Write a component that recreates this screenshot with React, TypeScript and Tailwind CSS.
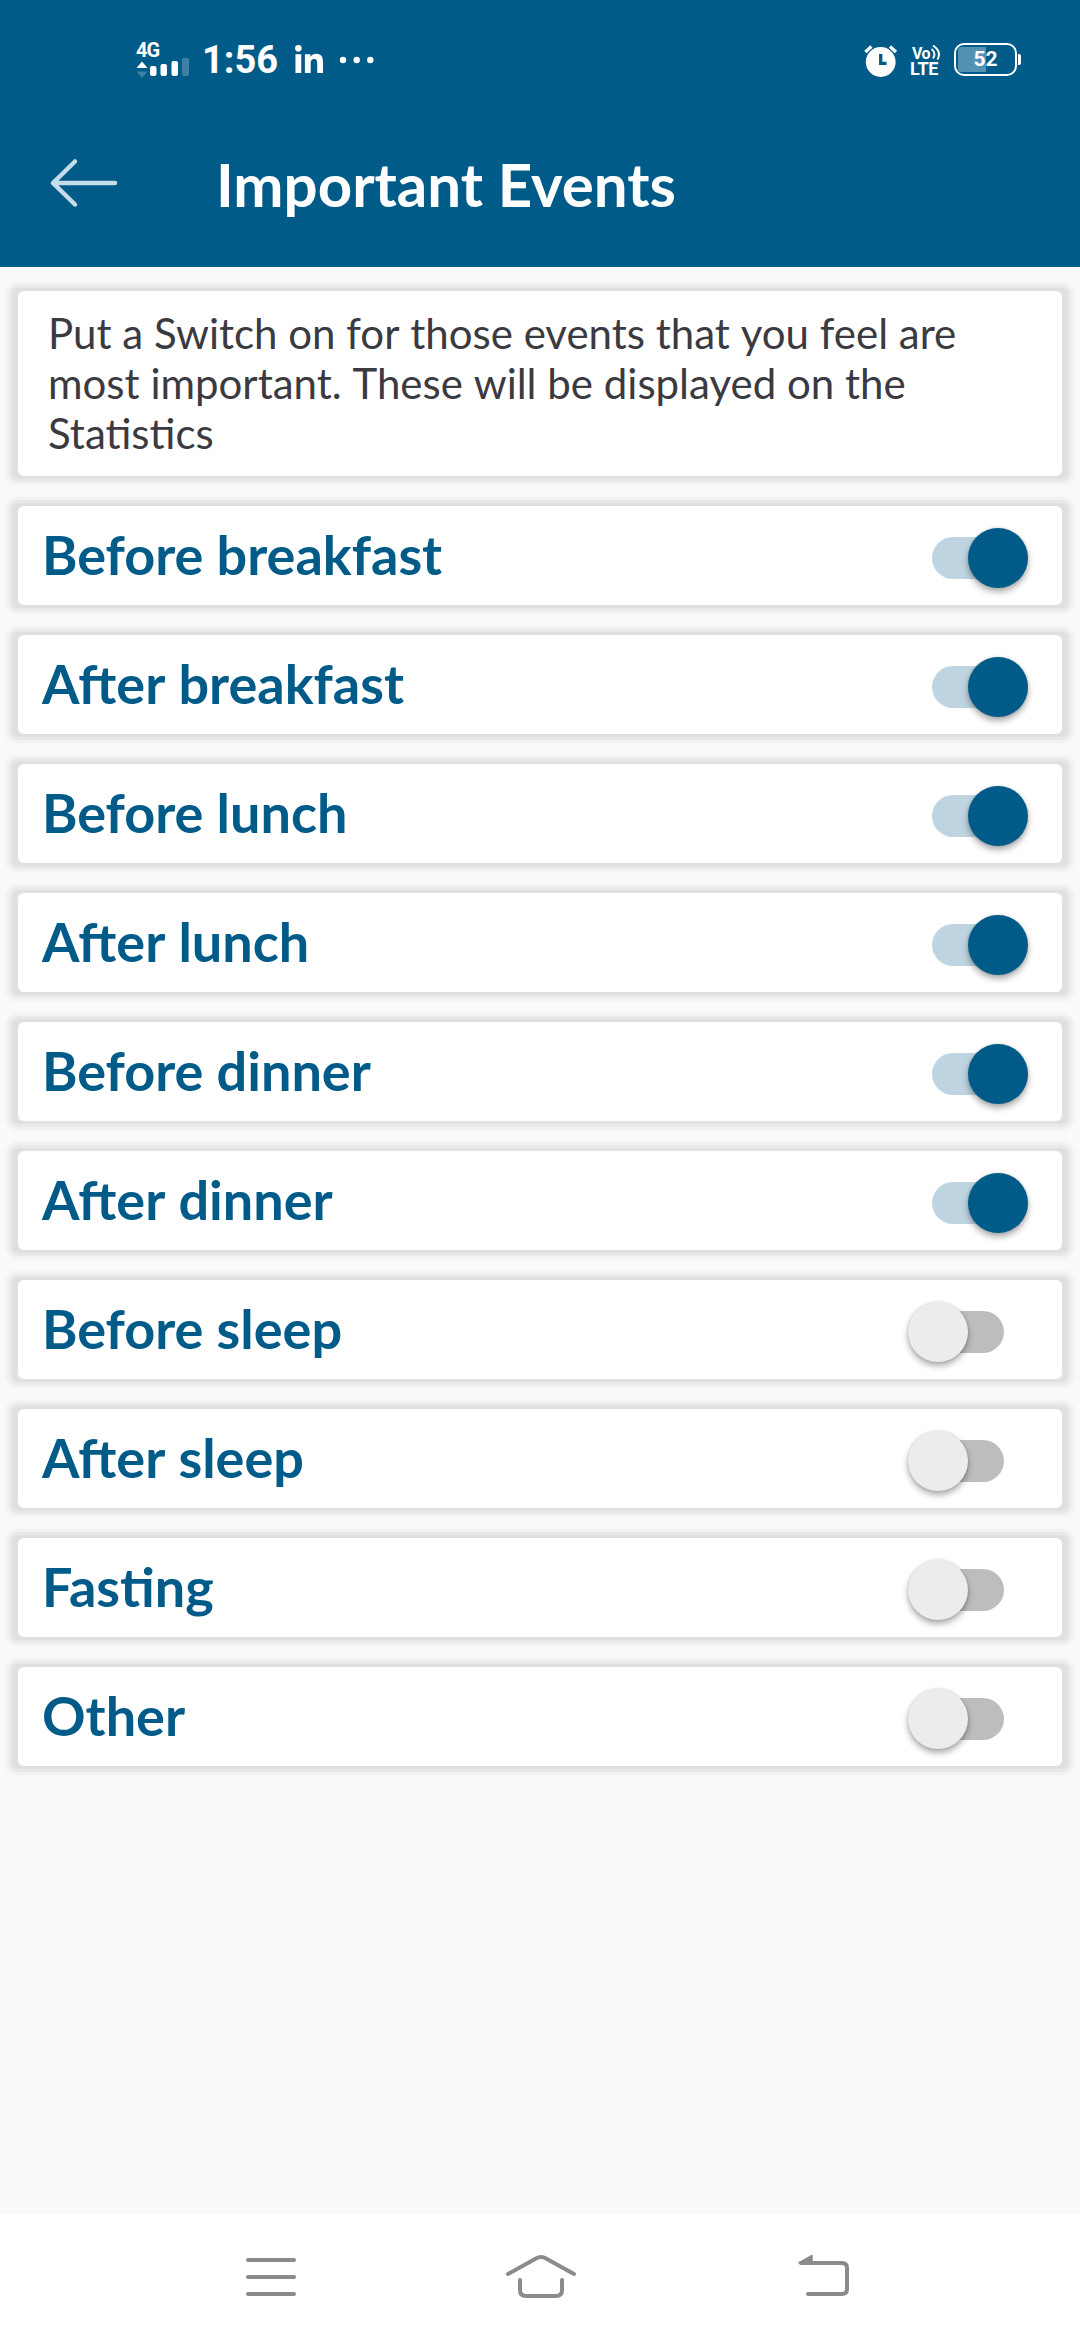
import { FaLinkedinIn } from "react-icons/fa";
import { Fragment, type ReactNode } from "react";

type EventItem = { label: string; on: boolean };

const events: EventItem[] = [
  { label: "Before breakfast", on: true },
  { label: "After breakfast", on: true },
  { label: "Before lunch", on: true },
  { label: "After lunch", on: true },
  { label: "Before dinner", on: true },
  { label: "After dinner", on: true },
  { label: "Before sleep", on: false },
  { label: "After sleep", on: false },
  { label: "Fasting", on: false },
  { label: "Other", on: false },
];

/** Sets each word on its own, so no kerning is applied across the spaces. */
function Words({ text }: { text: string }) {
  return (
    <>
      {text.split(" ").map((word, i) => (
        <Fragment key={i}>
          {i > 0 && " "}
          <span className="inline-block">{word}</span>
        </Fragment>
      ))}
    </>
  );
}

function Card({ children }: { children: ReactNode }) {
  return (
    <div className="rounded-[6px] bg-[#e0e0e0] px-[6px] py-[3px] shadow-[0_0_0_3px_#e9e9e9,0_0_0_6px_#f2f2f2,0_0_0_9px_#f8f8f8]">
      <div className="rounded-[6px] bg-white">{children}</div>
    </div>
  );
}

function Toggle({ on }: { on: boolean }) {
  return (
    <div className="mt-[5px] flex h-[60px] w-[120px] items-center justify-center">
      <div className={`flex h-[42px] w-[72px] items-center rounded-full ${on ? "justify-end bg-[#bed4e1]" : "justify-start bg-[#bdbdbd]"}`}>
        <div
          className={`size-[60px] shrink-0 rounded-full shadow-[0_4px_6px_rgba(0,0,0,0.32),0_0_3px_rgba(0,0,0,0.14)] ${
            on ? "-mr-6 bg-[#015b88]" : "-ml-6 bg-[#ececec]"
          }`}
        />
      </div>
    </div>
  );
}

function StatusBar() {
  return (
    <div className="flex h-[120px] justify-between pr-[59px] pl-[135px] font-[Roboto,sans-serif] text-white">
      <div className="flex">
        <div className="mt-[40px] w-[56px]">
          <div className="h-[20px] pl-px text-[20px] leading-[20px] font-bold tracking-[-1px]">4G</div>
          <svg className="block" width="56" height="22" viewBox="0 0 56 22" overflow="visible">
            <path d="M1.500 8L7 1.500L12.500 8Z" fill="#fff" />
            <path d="M1.500 11.500L7 18L12.500 11.500Z" fill="#3e80a6" />
            <rect x="15" y="6" width="6.500" height="10" rx="2" fill="#fff" />
            <rect x="25.500" y="4" width="6.500" height="12" rx="2" fill="#fff" />
            <rect x="36.500" y="1" width="6.500" height="15" rx="2" fill="#fff" />
            <rect x="47" y="-2" width="7" height="18" rx="2" fill="#3e80a6" />
          </svg>
        </div>
        <div className="mt-[38px] ml-[11px] w-[77px] text-[38px] leading-[44px] font-bold whitespace-nowrap">1:56</div>
        <FaLinkedinIn className="mt-[45px] ml-[14px] size-[32px]" />
        <svg className="mt-[56px] ml-[14px]" width="36" height="8" viewBox="0 0 36 8">
          <circle cx="4" cy="4" r="3.200" fill="#fff" />
          <circle cx="17.700" cy="4" r="3.200" fill="#fff" />
          <circle cx="31.300" cy="4" r="3.200" fill="#fff" />
        </svg>
      </div>
      <div className="flex">
        <svg className="mt-[44px]" width="34" height="34" viewBox="0 0 34 34">
          <circle cx="16.700" cy="18" r="14.900" fill="#fff" />
          <path d="M1.400 8L7.400 2.500M32 8L26 2.500" stroke="#fff" strokeWidth="3.200" />
          <path d="M16.700 10V19.300H22.500" stroke="#015b88" strokeWidth="3.300" fill="none" />
        </svg>
        <div className="mt-[44px] ml-[12px] w-[34px]">
          <div className="flex h-[17px] pl-[2px] text-[16px] leading-none font-bold">
            <span className="w-[18.500px] pt-[2px] leading-[15px] tracking-[-0.5px]">Vo</span>
            <svg className="shrink-0" width="11" height="17" viewBox="0 0 11 17">
              <path d="M0.500 5Q5.500 9 2 14.500M2 1.500Q11 7.500 6.500 15.500" stroke="#fff" strokeWidth="1.900" fill="none" />
            </svg>
          </div>
          <div className="text-[18px] leading-[15px] font-bold tracking-[-0.3px]">LTE</div>
        </div>
        <div className="mt-[43px] ml-[10px] flex h-[33px] items-center gap-px">
          <div className="relative flex h-[33px] w-[63px] items-center justify-center rounded-[10px] border-[2.500px] border-white">
            <div className="absolute top-[2px] bottom-[2px] left-[2px] w-[28px] rounded-l-[3px] bg-[#5591b3]" />
            <span className="relative text-[21px] leading-none font-bold">52</span>
          </div>
          <div className="h-[11px] w-[3px] rounded-r-[2px] bg-white" />
        </div>
      </div>
    </div>
  );
}

export default function App() {
  return (
    <div className="flex h-[2340px] w-[1080px] flex-col overflow-hidden bg-[#fafafa] font-[Lato,sans-serif]">
      <header className="h-[267px] bg-[#015b88]">
        <StatusBar />
        <div className="flex items-start pt-[27px]">
          <svg className="mt-[9px] ml-[48px]" width="72" height="54" viewBox="0 0 72 54" fill="none" stroke="#c6dcea" strokeWidth="4.500" strokeLinecap="round" strokeLinejoin="round">
            <path d="M67 27H5M27 5.500L5 27L27 48.500" />
          </svg>
          <h1 className="mt-px ml-[96px] text-[60px] leading-[72px] font-bold whitespace-nowrap text-white">
            <Words text="Important Events" />
          </h1>
        </div>
      </header>

      <main className="flex grow flex-col gap-6 px-3 pt-[21px]">
        <Card>
          <p className="h-[185px] pt-[17px] pl-[30px] text-[42px] leading-[50px] whitespace-nowrap text-[#3b3a40]">
            <Words text="Put a Switch on for those events that you feel are" />
            <br />
            <Words text="most important. These will be displayed on the" />
            <br />
            <Words text="Statistics" />
          </p>
        </Card>
        {events.map((e) => (
          <Card key={e.label}>
            <div className="flex h-[99px] items-center justify-between pr-[34px] pl-[24px]">
              <span className="-mt-[2px] text-[54px] leading-[64px] font-bold whitespace-nowrap text-[#015b88]">
                <Words text={e.label} />
              </span>
              <Toggle on={e.on} />
            </div>
          </Card>
        ))}
      </main>

      <nav className="flex h-[126px] items-start bg-white pt-[36px]">
        <svg className="ml-[240px]" width="60" height="54" viewBox="240 2250 60 54" stroke="#8b8b8b" strokeWidth="4" strokeLinecap="round">
          <path d="M248 2260H294M248 2277H294M248 2294H294" />
        </svg>
        <svg className="ml-[200px]" width="80" height="54" viewBox="500 2250 80 54" fill="none" stroke="#8b8b8b" strokeWidth="4" strokeLinecap="round">
          <path d="M508 2274L536 2258.500Q541 2255.500 546 2258.500L574 2274" />
          <path d="M520 2280V2290Q520 2296 526 2296H556Q562 2296 562 2290V2280" />
        </svg>
        <svg className="ml-[212px]" width="64" height="54" viewBox="792 2250 64 54" fill="none" stroke="#8b8b8b" strokeWidth="4" strokeLinecap="round">
          <path d="M801 2263H842Q847 2263 847 2268V2289Q847 2294 842 2294H808" />
          <path d="M799 2263L812 2255.500V2263Z" fill="#8b8b8b" strokeWidth="1.500" strokeLinejoin="round" />
        </svg>
      </nav>
    </div>
  );
}
